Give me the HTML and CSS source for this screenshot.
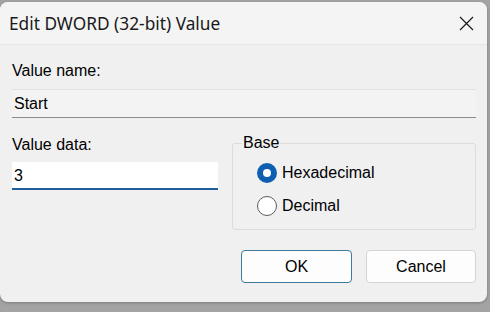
FILE: index.html
```html
<!DOCTYPE html>
<html lang="en">
<head>
  <meta charset="UTF-8" />
  <title>Edit DWORD (32-bit) Value</title>
  <link rel="stylesheet" href="styles.css">
</head>
<body>
  <div class="dialog">
    <div class="titlebar">
      <span class="title">Edit DWORD (32-bit) Value</span>
      <svg class="close" width="15" height="15" viewBox="0 0 15 15">
        <path d="M1 1 L14 14 M14 1 L1 14" stroke="#1a1a1a" stroke-width="1.2" fill="none" />
      </svg>
    </div>
    <div class="content">
      <label class="label">Value name:</label>
      <div class="field readonly">Start</div>
      <div class="row">
        <div class="data-col">
          <label class="label">Value data:</label>
          <div class="field edit">3</div>
        </div>
        <fieldset class="base">
          <legend>Base</legend>
          <div class="radio">
            <span class="dot checked"></span>Hexadecimal
          </div>
          <div class="radio">
            <span class="dot"></span>Decimal
          </div>
        </fieldset>
      </div>
      <div class="buttons">
        <button class="btn default">OK</button>
        <button class="btn">Cancel</button>
      </div>
    </div>
  </div>
</body>
</html>
```
FILE: styles.css
```css
body {
  margin: 0;
  background: #a3a3a3;
  height: 312px;
  overflow: hidden;
  font-family: "Liberation Sans", Arial, sans-serif;
}
.dialog {
  margin-top: 2px;
  width: 487px;
  height: 300px;
  background: #f0f0f0;
  border-radius: 8px;
  overflow: hidden;
  box-shadow: 0 1px 3px rgba(0,0,0,0.25);
}
.titlebar {
  height: 42px;
  background: #f4f4f4;
  border-bottom: 1px solid #e6e6e6;
  display: flex;
  align-items: center;
  justify-content: space-between;
  padding: 0 13px 0 9px;
}
.title {
  font-family: "Noto Sans", sans-serif;
  font-size: 17.3px;
  color: #1a1a1a;
  margin-top: 1px;
}
.close {
  margin-top: 1px;
}
.content {
  padding: 17px 11px 0 12px;
  font-size: 16px;
  color: #000;
}
.label {
  display: block;
  line-height: 18px;
}
.field {
  box-sizing: border-box;
  padding: 4px 2px;
  line-height: 20px;
}
.readonly {
  height: 29px;
  margin-top: 9px;
  background: #f3f3f3;
  border-top: 1px solid #e3e3e3;
  border-bottom: 1px solid #8a8a8a;
}
.row {
  display: flex;
  margin-top: 18px;
  gap: 14px;
}
.data-col {
  width: 206px;
}
.edit {
  height: 28px;
  margin-top: 8px;
  background: #fff;
  border-bottom: 2px solid #1e5e9a;
}
.base {
  flex: 1;
  margin: 0;
  margin-top: -2px;
  padding: 4px 0 0 24px;
  border: 1px solid #dcdcdc;
  border-radius: 3px;
  height: 96px;
  box-sizing: border-box;
  align-self: flex-start;
}
.base legend {
  padding: 0 1px;
  margin-left: -15px;
  line-height: 18px;
}
.radio {
  display: flex;
  align-items: center;
  height: 33px;
}
.dot {
  box-sizing: border-box;
  width: 20px;
  height: 20px;
  border-radius: 50%;
  border: 1px solid #5a5a5a;
  background: #fff;
  margin-right: 5px;
}
.dot.checked {
  border: 6px solid #0f5fb1;
  background: #fff;
}
.buttons {
  display: flex;
  justify-content: flex-end;
  gap: 14px;
  margin-top: 20px;
}
.btn {
  width: 110px;
  height: 33px;
  font-family: "Liberation Sans", Arial, sans-serif;
  font-size: 16px;
  color: #000;
  background: #fdfdfd;
  border: 1px solid #d4d4d4;
  border-radius: 4px;
}
.btn.default {
  width: 111px;
  border-color: #3e7a9c;
}
```
